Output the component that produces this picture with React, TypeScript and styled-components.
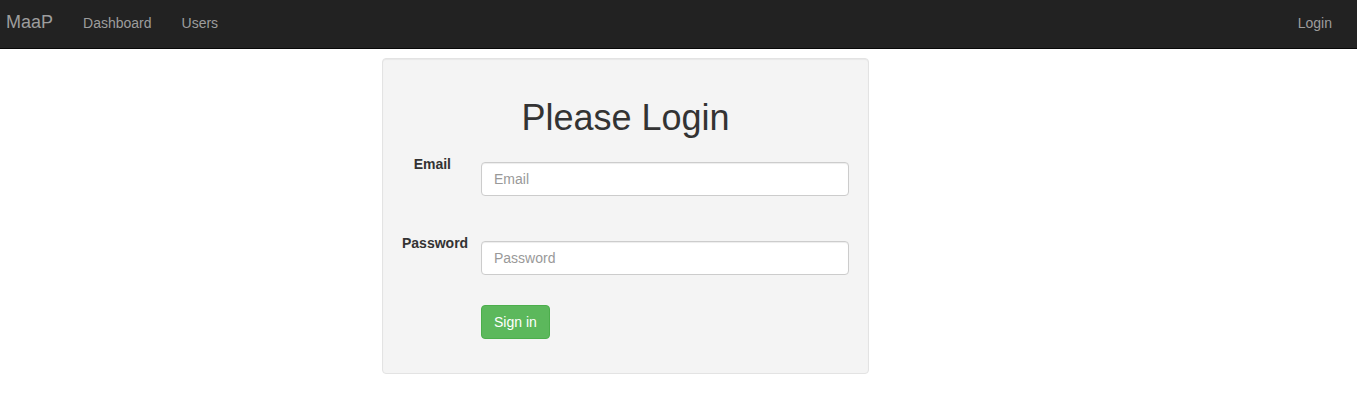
import React from "react";
import styled, { createGlobalStyle } from "styled-components";

const GlobalStyle = createGlobalStyle`
  * { box-sizing: border-box; }
  html, body { margin: 0; padding: 0; background: #fff; }
  body {
    font-family: "Liberation Sans", Arial, sans-serif;
    font-size: 14px;
    line-height: 1.42857143;
    color: #333;
  }
`;

const Navbar = styled.nav`
  display: flex;
  align-items: flex-start;
  height: 49px;
  background: #222;
  border-bottom: 1px solid #080808;
  padding: 0 10px 0 6px;
`;

const Brand = styled.a`
  font-size: 18px;
  line-height: 20px;
  padding: 12px 15px 0 0;
  color: #9d9d9d;
  text-decoration: none;
`;

const NavList = styled.ul<{ $right?: boolean }>`
  display: flex;
  list-style: none;
  margin: 0 0 0 ${(p) => (p.$right ? "auto" : "0")};
  padding: 0;
`;

const NavLink = styled.a`
  display: block;
  padding: 13px 15px 15px;
  line-height: 20px;
  font-size: 14px;
  color: #9d9d9d;
  text-decoration: none;
`;

const Main = styled.main`
  padding-top: 9px;
`;

const Well = styled.div`
  margin-left: 382px;
  width: 487px;
  min-height: 20px;
  padding: 19px;
  background: #f4f4f4;
  border: 1px solid #e3e3e3;
  border-radius: 4px;
  box-shadow: inset 0 1px 1px rgba(0, 0, 0, 0.05);
`;

const Title = styled.h1`
  margin: 20px 0 10px;
  font-size: 36px;
  font-weight: 500;
  line-height: 1.1;
  text-align: center;
  color: #333;
`;

const Form = styled.form`
  display: flex;
  flex-direction: column;
`;

const FormGroup = styled.div<{ $mb: number }>`
  display: grid;
  grid-template-columns: 49px 368px;
  column-gap: 30px;
  align-items: start;
  margin-bottom: ${(p) => p.$mb}px;
`;

const Label = styled.label`
  padding-top: 6px;
  font-weight: bold;
  line-height: 20px;
  text-align: right;
  white-space: nowrap;
`;

const Field = styled.div`
  grid-column: 2;
  padding-top: 14px;
`;

const Input = styled.input`
  display: block;
  width: 100%;
  height: 34px;
  padding: 6px 12px;
  font-family: inherit;
  font-size: 14px;
  line-height: 1.42857143;
  color: #555;
  background: #fff;
  border: 1px solid #ccc;
  border-radius: 4px;
  box-shadow: inset 0 1px 1px rgba(0, 0, 0, 0.075);
  outline: none;
  &::placeholder { color: #999; }
`;

const Button = styled.button`
  display: inline-block;
  padding: 6px 12px;
  font-family: inherit;
  font-size: 14px;
  line-height: 1.42857143;
  color: #fff;
  background: #5cb85c;
  border: 1px solid #4cae4c;
  border-radius: 4px;
  cursor: pointer;
`;

export default function App() {
  return (
    <>
      <GlobalStyle />
      <Navbar>
        <Brand href="#">MaaP</Brand>
        <NavList>
          <li><NavLink href="#">Dashboard</NavLink></li>
          <li><NavLink href="#">Users</NavLink></li>
        </NavList>
        <NavList $right>
          <li><NavLink href="#">Login</NavLink></li>
        </NavList>
      </Navbar>
      <Main>
        <Well>
          <Title>Please Login</Title>
          <Form onSubmit={(e) => e.preventDefault()}>
            <FormGroup $mb={31}>
              <Label htmlFor="email">Email</Label>
              <Field>
                <Input id="email" type="email" placeholder="Email" />
              </Field>
            </FormGroup>
            <FormGroup $mb={16}>
              <Label htmlFor="password">Password</Label>
              <Field>
                <Input id="password" type="password" placeholder="Password" />
              </Field>
            </FormGroup>
            <FormGroup $mb={15}>
              <Field>
                <Button type="submit">Sign in</Button>
              </Field>
            </FormGroup>
          </Form>
        </Well>
      </Main>
    </>
  );
}
